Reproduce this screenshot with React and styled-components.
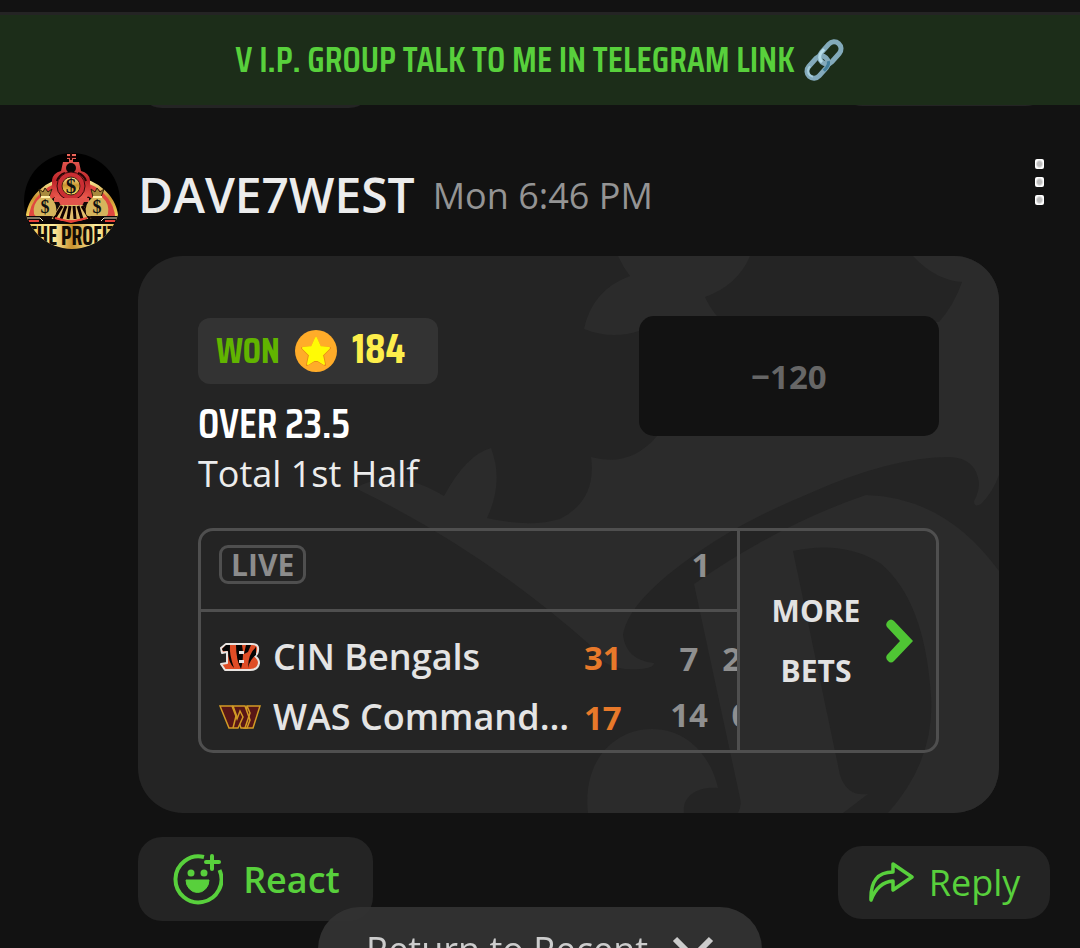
import React from "react";
import styled, { createGlobalStyle } from "styled-components";

const GlobalStyle = createGlobalStyle`
  * {
    box-sizing: border-box;
  }
  body {
    margin: 0;
    background: #121212;
    color: #e4e4e4;
    font-family: "Open Sans", "Noto Sans", sans-serif;
    overflow: hidden;
  }
  button {
    padding: 0;
    border: 0;
    background: none;
    color: inherit;
    font: inherit;
    cursor: pointer;
  }
  table {
    border-collapse: collapse;
    border-spacing: 0;
  }
  th,
  td {
    padding: 0;
    text-align: left;
  }
`;

const narrow = `"Saira Condensed", "Saira SemiCondensed", "Roboto Condensed", sans-serif`;

const Page = styled.div`
  min-height: 100vh;
  padding-top: 12px;
`;
const Banner = styled.a`
  display: flex;
  align-items: center;
  justify-content: center;
  gap: 8px;
  height: 93px;
  border-top: 3px solid #242424;
  background: #1c2d19;
  color: #58d03c;
  font-family: ${narrow};
  font-size: 36px;
  font-weight: 600;
  line-height: 48px;
  text-decoration: none;
  white-space: nowrap;
`;
const PreviousActions = styled.div`
  display: flex;
  align-items: flex-end;
  justify-content: space-between;
  height: 3px;
  padding: 0 30px 0 138px;
  overflow: hidden;
`;
const PreviousPill = styled.div`
  flex: none;
  width: ${(props) => props.$width}px;
  height: 72px;
  margin-bottom: ${(props) => props.$lift || 0}px;
  border-radius: 24px;
  background: #242424;
`;

const Message = styled.article`
  display: grid;
  grid-template-columns: 96px minmax(0, 1fr);
  column-gap: 18px;
  padding: 45px 30px 0 24px;
`;
const Header = styled.header`
  display: flex;
  align-items: center;
  gap: 18px;
  height: 84px;
  margin-bottom: 19px;
`;
const Author = styled.h2`
  margin: 0;
  color: #ececec;
  font-size: 48px;
  font-weight: 600;
  line-height: 60px;
`;
const Time = styled.time`
  color: #949494;
  font-size: 36px;
`;
const MenuButton = styled.button`
  display: flex;
  flex-direction: column;
  gap: 8px;
  align-self: flex-start;
  margin: 6px 6px 0 auto;
`;
const Dot = styled.span`
  width: 9px;
  height: 10px;
  border-radius: 2px;
  background: radial-gradient(#bdbdbd 2px, #ffffff 4px);
`;

const Card = styled.section`
  position: relative;
  margin-right: 51px;
  padding: 60px;
  border-radius: 45px;
  background: #242424;
  overflow: hidden;
`;
const CardArt = styled.svg`
  position: absolute;
  right: 0;
  bottom: 0;
`;
const Pick = styled.div`
  position: relative;
  display: flex;
  justify-content: space-between;
  align-items: flex-start;
  margin-bottom: 30px;
`;
const Result = styled.div`
  display: flex;
  align-items: baseline;
  gap: 15px;
  width: 240px;
  height: 66px;
  margin: 2px 0 15px;
  padding-left: 18px;
  border-radius: 12px;
  background: #333333;
  font-family: ${narrow};
  font-weight: 700;
  line-height: 60px;

  svg {
    align-self: center;
  }
`;
const Won = styled.span`
  color: #61b400;
  font-size: 36px;
`;
const Amount = styled.span`
  color: #fdee4b;
  font-size: 42px;
`;
const Selection = styled.h3`
  margin: 0;
  color: #ffffff;
  font-family: ${narrow};
  font-size: 42px;
  font-weight: 600;
  line-height: 48px;
`;
const Market = styled.p`
  margin: 3px 0 0;
  color: #ececec;
  font-size: 36px;
  line-height: 48px;
`;
const Odds = styled.button`
  width: 300px;
  height: 120px;
  border-radius: 15px;
  background: #121212;
  color: #666666;
  font-size: 33px;
  font-weight: 700;
`;

const Game = styled.div`
  position: relative;
  display: flex;
  border: 3px solid #4f4f4f;
  border-radius: 15px;
`;
const Score = styled.div`
  display: flex;
  flex: 1;
  align-items: flex-start;
  min-width: 0;
  height: 219px;
  overflow: hidden;
`;
const Teams = styled.table`
  flex: none;
  width: 450px;
  table-layout: fixed;
`;
const Periods = styled.table`
  flex: none;
  width: 116px;
  table-layout: fixed;
  color: #8f8f8f;
  font-size: 33px;
  font-weight: 700;
  line-height: 45px;

  td,
  th {
    text-align: center;
  }
`;
const HeadRow = styled.tr`
  height: 79px;
  border-bottom: 3px solid #4f4f4f;

  th {
    padding: 0 0 11px ${(props) => props.$indent || 0}px;
  }
`;
const Spacer = styled.tbody`
  height: ${(props) => props.$height}px;
`;
const Row = styled.tr`
  height: ${(props) => props.$height}px;
`;
const Live = styled.span`
  display: inline-block;
  padding: 0 9px;
  border: 3px solid #4f4f4f;
  border-radius: 9px;
  color: #8c8c8c;
  font-size: 30px;
  font-weight: 700;
  line-height: 33px;
  vertical-align: middle;
`;
const Team = styled.div`
  display: flex;
  align-items: center;
  gap: 12px;
  padding-left: 18px;
  font-size: 36px;
  font-weight: 600;
  line-height: 48px;

  svg {
    flex: none;
  }
  span {
    overflow: hidden;
    text-overflow: ellipsis;
    white-space: nowrap;
  }
`;
const Points = styled.td`
  padding-left: 11px;
  color: #e8792a;
  font-size: 33px;
  font-weight: 700;
`;
const MoreBets = styled.button`
  display: flex;
  flex: none;
  align-items: center;
  gap: 24px;
  width: 199px;
  padding-left: 30px;
  border-left: 3px solid #4f4f4f;
  color: #e2e2e2;
  font-size: 30px;
  font-weight: 700;
  line-height: 60px;
  text-align: center;

  span {
    width: 92px;
  }
`;

const Actions = styled.footer`
  display: flex;
  justify-content: space-between;
  align-items: flex-start;
  margin-top: 24px;
`;
const Action = styled.button`
  display: flex;
  align-items: center;
  justify-content: center;
  gap: ${(props) => (props.$strong ? 20 : 15)}px;
  width: ${(props) => (props.$strong ? 235 : 212)}px;
  height: ${(props) => (props.$strong ? 84 : 73)}px;
  margin-top: ${(props) => (props.$strong ? 0 : 9)}px;
  border-radius: 24px;
  background: #242424;
  color: #58d03c;
  font-size: 36px;
  font-weight: ${(props) => (props.$strong ? 600 : 400)};
`;
const ReturnButton = styled.button`
  position: fixed;
  bottom: -43px;
  left: 50%;
  transform: translateX(-50%);
  display: flex;
  align-items: center;
  justify-content: center;
  gap: 24px;
  width: 444px;
  height: 84px;
  border-radius: 42px;
  background: rgba(51, 51, 51, 0.93);
  color: #cccccc;
  font-size: 36px;
  white-space: nowrap;
`;

const LinkIcon = () => (
  <svg width="42" height="42" viewBox="0 0 42 42" fill="none" aria-hidden="true">
    <g transform="rotate(42 21 21)">
      <rect x="14" y="-1" width="14" height="25" rx="7" stroke="#83aabb" strokeWidth="5" />
      <rect x="14" y="18" width="14" height="25" rx="7" stroke="#83aabb" strokeWidth="5" />
      <path d="M14 13v4a7 7 0 0 0 7 7" stroke="#b5dbe8" strokeWidth="3" />
      <path d="M28 29v-4a7 7 0 0 0-3-6" stroke="#437f9c" strokeWidth="3" />
      <path d="M15 35v2a6 6 0 0 0 9 4" stroke="#a8cfdd" strokeWidth="2" />
    </g>
  </svg>
);

const MoneyBag = ({ x }) => (
  <g transform={`translate(${x} 36)`}>
    <path d="M-6 0l4 3 2-4 3 4 4-3-3 8h-8z" fill="#a88a3d" stroke="#33240d" strokeWidth="1" />
    <path d="M-4 8h9q8 7 6 17-1 3-5 2H-6q-4 1-5-2-2-10 7-17z" fill="#d6b45c" />
    <path d="M-4 8h9" stroke="#fff0a8" strokeWidth="2" />
    <text x="0" y="24" textAnchor="middle" fontFamily="Liberation Serif, serif" fontSize="18" fontWeight="700" fill="#111">
      $
    </text>
  </g>
);

const Avatar = () => (
  <svg width="96" height="96" viewBox="0 0 96 96" role="img" aria-label="THE PROFIT">
    <defs>
      <clipPath id="avatarClip">
        <circle cx="48" cy="48" r="48" />
      </clipPath>
      <linearGradient id="gold" x1="0" y1="0" x2="0" y2="1">
        <stop offset="0" stopColor="#fff1a0" />
        <stop offset=".45" stopColor="#c9922f" />
        <stop offset="1" stopColor="#ffe467" />
      </linearGradient>
      <linearGradient id="plate">
        <stop offset="0" stopColor="#e9c04c" />
        <stop offset=".3" stopColor="#fff0a0" />
        <stop offset=".5" stopColor="#c9922f" />
        <stop offset=".75" stopColor="#fff0a0" />
        <stop offset="1" stopColor="#d8a63b" />
      </linearGradient>
      <linearGradient id="red" x1="0" y1="0" x2="0" y2="1">
        <stop offset="0" stopColor="#f0695c" />
        <stop offset=".6" stopColor="#bd2429" />
        <stop offset="1" stopColor="#ea594d" />
      </linearGradient>
    </defs>
    <g clipPath="url(#avatarClip)">
      <rect width="96" height="96" fill="#000" />
      <path d="M3 68A45 42 0 0 1 93 68" fill="#df473f" stroke="url(#gold)" strokeWidth="3" />
      <path d="M13 66A36 34 0 0 1 83 66z" fill="#120807" />
      <path d="M43 1h9v5h-3v3h6l2 9q8 2 9 9v5q2 5-1 9l-2 4H31l-2-4q-3-4-1-9v-5q1-7 9-9l2-9h6V6h-2z" fill="url(#red)" />
      <path d="M43 4h9M47 0v7M33 28q2-6 8-8M62 28q-2-6-8-8" stroke="#260505" strokeWidth="2" fill="none" />
      <circle cx="47" cy="15" r="5" fill="#080606" />
      <circle cx="47" cy="33" r="14" fill="#cb2e33" stroke="#390b0d" />
      <circle cx="47" cy="33" r="9" fill="url(#gold)" stroke="#4c2812" />
      <text x="47" y="40" textAnchor="middle" fontFamily="Liberation Serif, serif" fontSize="21" fontWeight="700" fill="#111">
        $
      </text>
      <path d="M30 45h35v4h-5l-2 4H37l-2-4h-5z" fill="#e2554c" />
      <path d="M36 52h23l9 15H27z" fill="#e2bd6b" />
      <path d="M38 53l-8 13M42 53l-5 13M46 53l-2 13M50 53l1 13M54 53l4 13M58 53l8 13" stroke="#100" strokeWidth="3" />
      <MoneyBag x={21} />
      <MoneyBag x={73} />
      <path d="M0 63h16l2 3h14l15 5 15-5h13l3-3h18v8H0z" fill="#0b0707" />
      <path d="M2 65h14l3 3M94 65H80l-3 3" stroke="#f2e8c4" fill="none" />
      <path d="M5 68h10M91 68H81M31 65l16 4 16-4" stroke="#e74137" strokeWidth="2" fill="none" />
      <path d="M0 71h96v25H0z" fill="url(#plate)" />
      <text
        x="48"
        y="92"
        textAnchor="middle"
        fontFamily={`"Saira ExtraCondensed", ${narrow}`}
        fontSize="26"
        fontWeight="700"
        fill="#120c05"
      >
        THE PROFIT
      </text>
    </g>
  </svg>
);

const StarCoin = () => (
  <svg width="42" height="42" viewBox="0 0 42 42" aria-hidden="true">
    <circle cx="21" cy="21" r="21" fill="#ffac29" />
    <path
      d="M21 8l4 9 10 1-7 7 2 10-9-5-9 5 2-10-7-7 10-1z"
      fill="#e98c16"
      stroke="#e98c16"
      strokeWidth="2"
      strokeLinejoin="round"
    />
    <path
      d="M21 8l4 9 9 1-7 7 2 9-8-5-8 5 2-9-7-7 9-1z"
      fill="#fffb05"
      stroke="#fffb05"
      strokeWidth="2"
      strokeLinejoin="round"
    />
  </svg>
);

const BengalsLogo = () => (
  <svg width="42" height="30" viewBox="0 0 42 30" aria-hidden="true">
    <path
      d="M2 6l5-4h26q7 0 6 6 0 4-3 6 4 3 4 7-1 7-9 7H6l-4-6 6-1V10l-5 1z"
      fill="#df4d26"
      stroke="#e8e4e1"
      strokeWidth="2"
      strokeLinejoin="round"
    />
    <path d="M3 7l4-4h4q-1 9 4 23-6-6-6-17H4zM17 3h6l1 7q0 10-2 17-5-9-5-24zM27 3h5l-3 7-4 2zM37 5q-8 7-8 21 2-9 8-13z" fill="#050505" />
    <path d="M20 9h5v3h-5zM20 18h5v3h-5z" fill="#e8e4e1" />
  </svg>
);

const CommandersLogo = () => (
  <svg width="42" height="26" viewBox="0 0 42 26" aria-hidden="true">
    <g fill="#581616" stroke="#d39b25" strokeWidth="1.5" strokeLinejoin="miter">
      <path d="M28 2h13l-7 22h-9z" />
      <path d="M14 2h12l5 14-3 8h-6z" />
      <path d="M1 2h12l5 13 3-8 3 6-5 11h-9z" />
      <path d="M28 2l3 7-5 15M17 12l-3 12" fill="none" />
    </g>
  </svg>
);

const SmilePlus = () => (
  <svg width="52" height="52" viewBox="-1 0 52 52" fill="none" aria-hidden="true">
    <path d="M32 4A23 23 0 1 0 47.5 17" stroke="currentColor" strokeWidth="4" />
    <path d="M40 3v13M34 9h13" stroke="currentColor" strokeWidth="4" strokeLinecap="round" />
    <circle cx="19" cy="20" r="3.5" fill="currentColor" />
    <circle cx="32" cy="20" r="3.5" fill="currentColor" />
    <path d="M14 27h23a11.5 12.5 0 0 1-23 0z" fill="currentColor" stroke="currentColor" strokeLinejoin="round" />
  </svg>
);

const ReplyArrow = () => (
  <svg width="46" height="42" viewBox="0 0 46 42" fill="none" aria-hidden="true">
    <path
      d="M25 2l19 13-19 13v-9Q10 20 3 38 2 10 25 10z"
      stroke="currentColor"
      strokeWidth="3.5"
      strokeLinejoin="round"
    />
  </svg>
);

const teams = [
  { name: "CIN Bengals", points: 31, periods: [7, 21], Logo: BengalsLogo },
  { name: "WAS Commanders", points: 17, periods: [14, 0], Logo: CommandersLogo },
];

function Scoreboard() {
  return (
    <Score>
      <Teams>
        <colgroup>
          <col />
          <col width="78" />
        </colgroup>
        <thead>
          <HeadRow $indent={18}>
            <th colSpan={2}>
              <Live>LIVE</Live>
            </th>
          </HeadRow>
        </thead>
        <Spacer $height={17}>
          <Row $height={17}>
            <td colSpan={2} />
          </Row>
        </Spacer>
        <tbody>
          {teams.map(({ name, points, Logo }) => (
            <Row key={name} $height={60}>
              <td>
                <Team>
                  <Logo />
                  <span>{name}</span>
                </Team>
              </td>
              <Points>{points}</Points>
            </Row>
          ))}
        </tbody>
      </Teams>
      <Periods>
        <colgroup>
          <col width="12" />
          <col width="52" />
          <col width="52" />
        </colgroup>
        <thead>
          <HeadRow $indent={24}>
            <td />
            <th scope="col">1</th>
            <td />
          </HeadRow>
        </thead>
        <Spacer $height={20}>
          <Row $height={20}>
            <td colSpan={3} />
          </Row>
        </Spacer>
        <tbody>
          {teams.map(({ name, periods }) => (
            <Row key={name} $height={56}>
              <td />
              {periods.map((value, key) => (
                <td key={key}>{value}</td>
              ))}
            </Row>
          ))}
        </tbody>
      </Periods>
    </Score>
  );
}

function BetCard() {
  return (
    <Card>
      <CardArt width="861" height="557" viewBox="138 256 861 557" fill="#2b2b2b" aria-hidden="true">
        <path d="M618 256Q623 267 630 276Q592 290 584 329Q612 340 639 331L657 436Q630 468 591 457Q597 500 560 519Q530 528 487 518Q504 482 491 448Q466 455 444 496Q395 466 355 488Q480 548 590 645Q602 672 640 669Q654 668 654 663Q626 660 623 635Q628 600 700 551Q745 520 808 494Q890 457 950 457Q976 458 979 483Q979 492 974 501Q974 508 981 504Q993 492 999 475V256H913Q935 280 962 282Q954 305 939 322L717 316Q710 308 705 297Q738 285 750 256z" />
        <path
          fillRule="evenodd"
          d="M694 584Q780 524 866 495Q945 497 999 571V813H888Q935 760 931 697Q925 600 880 563Q843 540 793 551L840 775Q847 797 868 794L843 813H738Q742 806 740 798z"
        />
        <path d="M588 813C582 760 615 729 652 729C690 729 712 760 718 788C695 786 682 798 684 813z" />
      </CardArt>
      <Pick>
        <div>
          <Result>
            <Won>WON</Won>
            <StarCoin />
            <Amount>184</Amount>
          </Result>
          <Selection>OVER 23.5</Selection>
          <Market>Total 1st Half</Market>
        </div>
        <Odds type="button">−120</Odds>
      </Pick>
      <Game>
        <Scoreboard />
        <MoreBets type="button">
          <span>
            MORE
            <br />
            BETS
          </span>
          <svg width="27" height="44" viewBox="0 0 27 44" aria-hidden="true">
            <path d="M1 8Q-1 5 2 2 5-1 8 2L27 22 8 42Q5 45 2 42-1 39 1 36L14 22z" fill="#4fc534" />
          </svg>
        </MoreBets>
      </Game>
    </Card>
  );
}

function App() {
  return (
    <>
      <GlobalStyle />
      <Page>
        <Banner href="#telegram">
          V I.P. GROUP TALK TO ME IN TELEGRAM LINK
          <LinkIcon />
        </Banner>
        <PreviousActions>
          <PreviousPill $width={235} />
          <PreviousPill $width={212} $lift={2} />
        </PreviousActions>
        <Message>
          <Avatar />
          <div>
            <Header>
              <Author>DAVE7WEST</Author>
              <Time>Mon 6:46 PM</Time>
              <MenuButton type="button" aria-label="Message options">
                <Dot />
                <Dot />
                <Dot />
              </MenuButton>
            </Header>
            <BetCard />
            <Actions>
              <Action type="button" $strong>
                <SmilePlus />
                React
              </Action>
              <Action type="button">
                <ReplyArrow />
                Reply
              </Action>
            </Actions>
          </div>
        </Message>
        <ReturnButton type="button">
          Return to Recent
          <svg width="42" height="26" viewBox="0 0 42 26" fill="none" aria-hidden="true">
            <path d="M3 3l18 18L39 3" stroke="currentColor" strokeWidth="6" />
          </svg>
        </ReturnButton>
      </Page>
    </>
  );
}

export default App;
